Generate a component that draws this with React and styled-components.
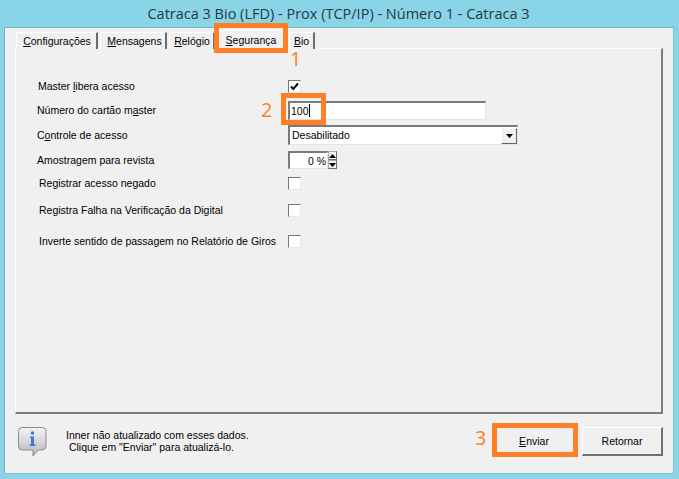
import React from "react";
import styled, { createGlobalStyle } from "styled-components";

const Global = createGlobalStyle`
  html, body { margin: 0; padding: 0; height: 100%; overflow: hidden; }
  body { background: #8ad4e7; }
`;
const Win = styled.div`
  position: relative; width: 679px; height: 479px; display: flex; flex-direction: column;
  background: #8ad4e7; font-family: "Liberation Sans", Arial, sans-serif; font-size: 10.5px; color: #000;
`;
const Title = styled.div`
  height: 26px; display: flex; align-items: center; justify-content: center;
  font-family: "Open Sans", "Noto Sans", sans-serif; font-size: 14.5px; color: #24384a; padding-right: 2px;
`;
const Client = styled.div`
  flex: 1; margin: 1px 5px 5px 4px; background: #f0f0f0; border: 1px solid #6fb4c8; border-right-color: #7cc0d3; border-bottom-color: #7cc0d3;
  display: flex; flex-direction: column; padding: 3px 10px 0 10px; min-height: 0;
`;
const TabStrip = styled.div`
  display: flex; align-items: flex-end; height: 18px; padding-left: 1px; position: relative; z-index: 1; margin-bottom: -1px;
`;
const Tab = styled.div`
  width: ${p => p.$w}px; height: ${p => p.$active ? 19 : 17}px; margin-right: ${p => p.$gap ?? 2}px;
  display: flex; align-items: center; justify-content: center; box-sizing: border-box;
  background: #f0f0f0; border-top: 1px solid #fff; border-left: 1px solid #fff;
  border-right: 2px solid #6d6d6d; padding-left: ${p => p.$pad ?? 1}px;
  ${p => p.$active ? "border-bottom: 1px solid #f0f0f0;" : ""}
  u { text-underline-offset: 1px; }
`;
const Panel = styled.div`
  height: 366px; box-sizing: border-box; border-top: 1px solid #fff; border-left: 1px solid #fff;
  border-right: 2px solid #7d7d7d; border-bottom: 2px solid #7d7d7d; padding-top: 27px;
  display: flex; flex-direction: column;
`;
const Row = styled.div`
  display: grid; grid-template-columns: 272px 1fr; align-items: center; height: ${p => p.$h}px;
`;
const Label = styled.label`
  padding-left: ${p => p.$x}px; white-space: nowrap;
  u { text-underline-offset: 1px; }
`;
const Check = styled.span`
  width: 13px; height: 13px; box-sizing: border-box; background: #fff; display: flex; align-items: center; justify-content: center;
  border-top: 1px solid #777; border-left: 1px solid #777; border-right: 1px solid #e8e8e8; border-bottom: 1px solid #e8e8e8;
`;
const sunken = `
  box-sizing: border-box; background: #fff;
  border-top: 2px solid #7a7a7a; border-left: 2px solid #7a7a7a; border-right: 1px solid #e4e4e4; border-bottom: 1px solid #e4e4e4;
`;
const TextBox = styled.div`
  ${sunken} width: 198px; height: 19px; display: flex; align-items: center; padding-left: 1px;
`;
const Caret = styled.span`
  width: 1px; height: 13px; background: #000;
`;
const Combo = styled.div`
  ${sunken} width: 230px; height: 20px; display: flex; align-items: center; justify-content: space-between; padding-left: 2px;
`;
const ComboText = styled.span`
  margin-top: -2px;
`;
const ComboBtn = styled.span`
  width: 16px; height: 16px; box-sizing: border-box; background: #f0f0f0; display: flex; align-items: center; justify-content: center;
  border-right: 1px solid #666; border-bottom: 1px solid #666; border-top: 1px solid #fff; border-left: 1px solid #fff;
`;
const Spin = styled.div`
  display: flex; align-items: center;
`;
const SpinBox = styled.div`
  ${sunken} width: 40px; height: 18px; display: flex; align-items: center; justify-content: flex-end; padding-right: 1px; white-space: pre;
`;
const SpinBtns = styled.div`
  display: flex; flex-direction: column; width: 9px;
`;
const SpinBtn = styled.span`
  height: 9px; box-sizing: border-box; display: flex; align-items: center; justify-content: center; background: #f0f0f0;
  border: 1px solid #6b6b6b; border-top-color: #aaa; border-left-color: #aaa;
`;
const Footer = styled.div`
  flex: 1; display: flex; align-items: flex-start; padding-top: 13px; padding-left: 2px;
`;
const InfoIcon = styled.svg`
  width: 32px; height: 32px; flex: none; margin-top: -1px;
`;
const Msg = styled.div`
  margin-left: 17px; margin-top: 2px; line-height: 12px; flex: 1; white-space: pre;
`;
const Btn = styled.button`
  width: 81px; height: 29px; margin-left: ${p => p.$ml ?? 0}px; box-sizing: border-box; background: #f0f0f0; padding: 0;
  font: inherit; color: #000;
  border-top: 1px solid #fff; border-left: 1px solid #fff; border-right: 2px solid #707070; border-bottom: 2px solid #707070;
  u { text-underline-offset: 1px; }
`;
const Highlight = styled.div`
  position: absolute; box-sizing: border-box; border: 5px solid #ff7f27; pointer-events: none; z-index: 3;
  left: ${p => p.$x}px; top: ${p => p.$y}px; width: ${p => p.$w}px; height: ${p => p.$h}px;
`;
const Num = styled.span`
  position: absolute; left: ${p => p.$x}px; top: ${p => p.$y}px; z-index: 3;
  font-family: "Open Sans", sans-serif; font-size: 20px; line-height: 18px; color: #ff7f27;
`;

const Tick = () => (
  <svg width="9" height="9" viewBox="0 0 9 9"><path d="M1 4.5 L3.3 7 L8 1.5" fill="none" stroke="#000" strokeWidth="2" /></svg>
);
const Down = () => (
  <svg width="7" height="4" viewBox="0 0 7 4"><path d="M0 0H7L3.5 4Z" fill="#000" /></svg>
);
const Up = () => (
  <svg width="7" height="4" viewBox="0 0 7 4"><path d="M0 4H7L3.5 0Z" fill="#000" /></svg>
);

export default function App() {
  return (
    <Win>
      <Global />
      <Title>Catraca 3 Bio (LFD) - Prox (TCP/IP) - Número 1 - Catraca 3</Title>
      <Client>
        <TabStrip>
          <Tab $w={82}><span><u>C</u>onfigurações</span></Tab>
          <Tab $w={67} $pad={3}><span><u>M</u>ensagens</span></Tab>
          <Tab $w={46} $gap={1}><span><u>R</u>elógio</span></Tab>
          <Tab $w={71} $active $gap={2} $pad={0}><span><u>S</u>egurança</span></Tab>
          <Tab $w={26} $pad={0}><span><u>B</u>io</span></Tab>
        </TabStrip>
        <Panel>
          <Row $h={20}>
            <Label $x={22}>Master <u>l</u>ibera acesso</Label>
            <Check><Tick /></Check>
          </Row>
          <Row $h={28}>
            <Label $x={21}>Número do cartão m<u>a</u>ster</Label>
            <TextBox>100<Caret /></TextBox>
          </Row>
          <Row $h={22}>
            <Label $x={21}>C<u>o</u>ntrole de acesso</Label>
            <Combo><ComboText>Desabilitado</ComboText><ComboBtn><Down /></ComboBtn></Combo>
          </Row>
          <Row $h={28}>
            <Label $x={21}>Amostragem para revista</Label>
            <Spin>
              <SpinBox>0 %</SpinBox>
              <SpinBtns>
                <SpinBtn><Up /></SpinBtn>
                <SpinBtn><Down /></SpinBtn>
              </SpinBtns>
            </Spin>
          </Row>
          <Row $h={18}>
            <Label $x={23}>Registrar acesso negado</Label>
            <Check />
          </Row>
          <Row $h={36}>
            <Label $x={23}>Registra Falha na Verificação da Digital</Label>
            <Check />
          </Row>
          <Row $h={26}>
            <Label $x={23}>Inverte sentido de passagem no Relatório de Giros</Label>
            <Check />
          </Row>
        </Panel>
        <Footer>
          <InfoIcon viewBox="0 0 32 32">
            <defs>
              <linearGradient id="bub" x1="0" y1="0" x2="0" y2="1">
                <stop offset="0" stopColor="#f4f4f4" />
                <stop offset="0.5" stopColor="#d4d6da" />
                <stop offset="1" stopColor="#b4b6bc" />
              </linearGradient>
            </defs>
            <path d="M5 1.5H25Q29 1.5 29 5.5V20Q29 24 25 24H21L16 30V24H5Q1.5 24 1.5 20V5.5Q1.5 1.5 5 1.5Z" fill="url(#bub)" stroke="#8a8c90" strokeWidth="1" />
            <circle cx="15.5" cy="7" r="1.7" fill="#4a75c8" />
            <path d="M13 10.5H17V18.5H18.5V20H12.5V18.5H14V12H13Z" fill="#4a75c8" />
          </InfoIcon>
          <Msg>{"Inner não atualizado com esses dados.\n Clique em \"Enviar\" para atualizá-lo."}</Msg>
          <Btn><u>E</u>nviar</Btn>
          <Btn $ml={7}>Retornar</Btn>
        </Footer>
      </Client>
      <Highlight $x={214} $y={23} $w={74} $h={30} />
      <Highlight $x={281} $y={93} $w={45} $h={32} />
      <Highlight $x={492} $y={423} $w={86} $h={34} />
      <Num $x={290} $y={50}>1</Num>
      <Num $x={261} $y={101}>2</Num>
      <Num $x={475} $y={429}>3</Num>
    </Win>
  );
}
